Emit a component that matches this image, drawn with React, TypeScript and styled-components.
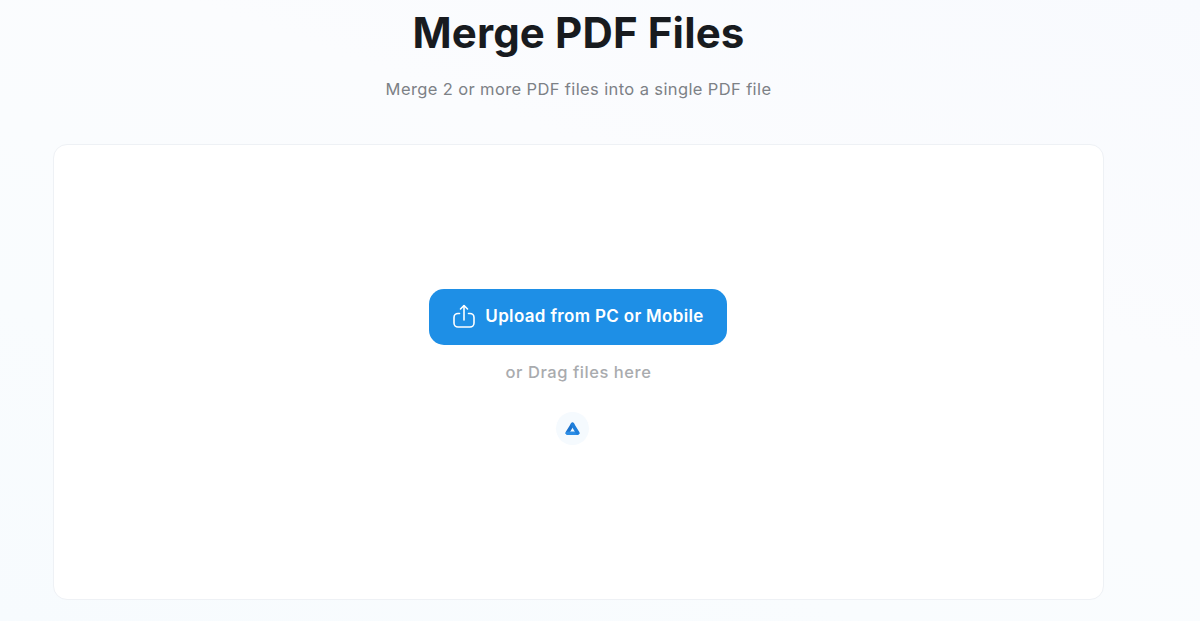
import React from "react";
import styled, { createGlobalStyle } from "styled-components";

const GlobalStyle = createGlobalStyle`
  html, body {
    margin: 0;
    padding: 0;
    height: 621px;
    overflow: hidden;
    background: #ffffff;
  }
  * {
    box-sizing: border-box;
  }
`;

const Page = styled.main`
  width: 1200px;
  height: 621px;
  padding: 7px 96px 21px 53px;
  display: flex;
  flex-direction: column;
  align-items: center;
  overflow: hidden;
  font-family: Inter, "Noto Sans", sans-serif;
  background: linear-gradient(200deg, #f8fafe 0%, #fbfcfe 35%, #f9fcfe 70%, #f7fbfe 100%);
`;

const Title = styled.h1`
  margin: 0;
  font-size: 42px;
  line-height: 52px;
  font-weight: 700;
  letter-spacing: 0.15px;
  color: #181b1f;
`;

const Subtitle = styled.p`
  margin: 18px 0 0;
  font-size: 16.5px;
  line-height: 24px;
  font-weight: 400;
  letter-spacing: 0.38px;
  color: #7d8186;
`;

const DropCard = styled.section`
  margin-top: 43px;
  width: 100%;
  flex: 1;
  display: flex;
  flex-direction: column;
  align-items: center;
  padding-top: 144px;
  background: #ffffff;
  border: 1px solid #eef1f5;
  border-radius: 14px;
`;

const UploadButton = styled.button`
  width: 298px;
  height: 56px;
  margin-right: 1px;
  display: flex;
  align-items: center;
  justify-content: center;
  gap: 9px;
  padding: 0 0 2px;
  border: none;
  border-radius: 15px;
  background: #1e8fe6;
  color: #ffffff;
  font-family: inherit;
  font-size: 17px;
  font-weight: 600;
  letter-spacing: 0.33px;
`;

const DragHint = styled.span`
  margin-top: 15px;
  font-size: 16.5px;
  line-height: 24px;
  font-weight: 500;
  letter-spacing: 0.55px;
  color: #a9abae;
`;

const DriveButton = styled.button`
  margin: 28px 13px 0 0;
  width: 33px;
  height: 33px;
  padding: 0;
  display: flex;
  align-items: center;
  justify-content: center;
  border: none;
  border-radius: 50%;
  background: #f5fafe;
`;

const ShareIcon = () => (
  <svg width="24" height="24" viewBox="0 0 24 24" fill="none" stroke="#fff" strokeWidth="1.6" strokeLinecap="round" strokeLinejoin="round">
    <path d="M7.5 9.5H6a4 4 0 0 0-4 4V19a4 4 0 0 0 4 4h12a4 4 0 0 0 4-4v-5.5a4 4 0 0 0-4-4h-1.5" />
    <path d="M12 16V2" />
    <path d="M8.5 5 12 1.5 15.5 5" />
  </svg>
);

const DriveIcon = () => (
  <svg width="15" height="14" viewBox="0 0 15 14" fill="none" strokeWidth="3.6" strokeLinejoin="round" strokeLinecap="round">
    <path d="M7.5 2.4 2.4 10.8" stroke="#1c72cc" />
    <path d="M2.4 11.2h10.2" stroke="#2b8de6" />
    <path d="M7.5 2.4 12.6 10.8" stroke="#1f7fdb" />
  </svg>
);

export default function App() {
  return (
    <>
      <GlobalStyle />
      <Page>
        <Title>Merge PDF Files</Title>
        <Subtitle>Merge 2 or more PDF files into a single PDF file</Subtitle>
        <DropCard>
          <UploadButton>
            <ShareIcon />
            Upload from PC or Mobile
          </UploadButton>
          <DragHint>or Drag files here</DragHint>
          <DriveButton aria-label="Google Drive">
            <DriveIcon />
          </DriveButton>
        </DropCard>
      </Page>
    </>
  );
}
